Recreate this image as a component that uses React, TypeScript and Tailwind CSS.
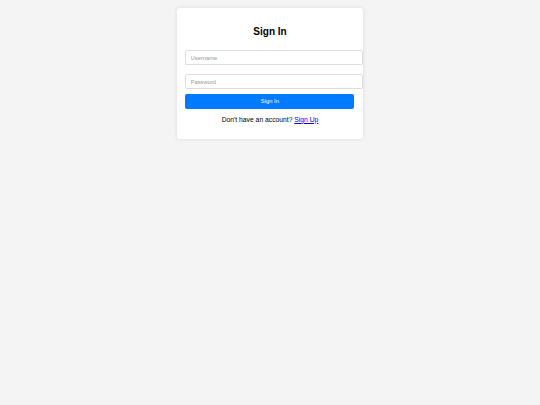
export default function App() {
  return (
    <div
      className="min-h-[405px] bg-[#f4f4f4] pt-[8.4px]"
      style={{ fontFamily: '"Liberation Sans", Arial, sans-serif' }}
    >
      <div className="mx-auto w-[186px] rounded-[3px] bg-white p-[8.4px] shadow-[0_0_4px_rgba(0,0,0,0.1)]">
        <h2 className="mt-[9.2px] mb-[7.6px] text-center text-[10px] font-bold leading-[12px] text-black">
          Sign In
        </h2>
        <form className="flex flex-col" onSubmit={(e) => e.preventDefault()}>
          <input
            type="text"
            placeholder="Username"
            className="my-[4.2px] h-[15.6px] w-[178px] rounded-[2px] border border-[#dddddd] px-[4.2px] text-[5.8px] placeholder:text-[#999999]"
          />
          <input
            type="password"
            placeholder="Password"
            className="my-[4.2px] h-[15.6px] w-[178px] rounded-[2px] border border-[#dddddd] px-[4.2px] text-[5.8px] placeholder:text-[#999999]"
          />
          <button
            type="submit"
            className="h-[15.6px] w-[169px] rounded-[2px] bg-[#007bff] text-[5.8px] text-white"
          >
            Sign In
          </button>
        </form>
        <p className="my-[6.75px] text-center text-[6.75px] leading-[7.8px] text-black">
          Don't have an account?{" "}
          <a href="#" className="text-[#0000ee] underline">
            Sign Up
          </a>
        </p>
      </div>
    </div>
  );
}
